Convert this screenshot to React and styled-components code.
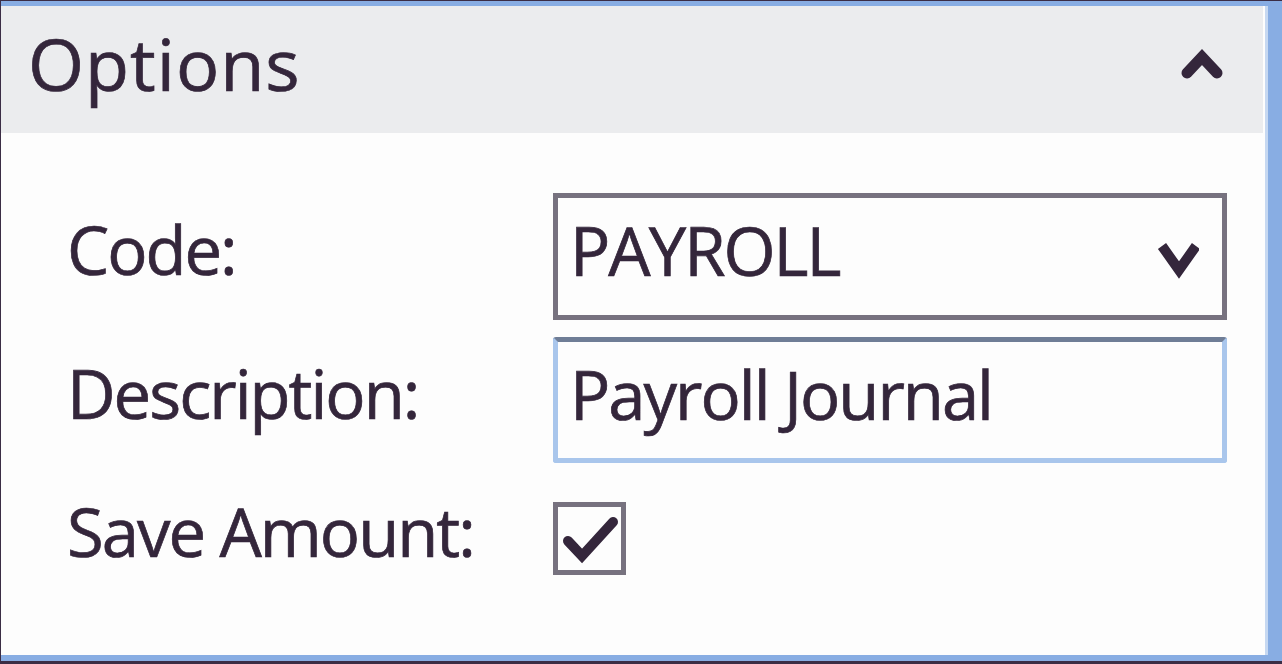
import React from "react";
import styled, { createGlobalStyle } from "styled-components";

const Global = createGlobalStyle`
  html, body {
    margin: 0;
    padding: 0;
    background: #ffffff;
  }
  #root {
    width: 1282px;
    height: 664px;
  }
`;

const ink = "#34263b";

const Frame = styled.div`
  box-sizing: border-box;
  width: 1282px;
  height: 664px;
  border-top: 1px solid #3b2d45;
  border-left: 1px solid #3b2d45;
  border-bottom: 3px solid #3b2d45;
  display: flex;
  font-family: "Open Sans", "Noto Sans", sans-serif;
  color: ${ink};
  -webkit-text-stroke: 0.7px ${ink};
`;

const Window = styled.div`
  box-sizing: border-box;
  flex: 1;
  display: flex;
  flex-direction: column;
  background: #fdfdfd;
  border-top: 5px solid #88ade3;
  border-right: 14px solid #88ade3;
  border-bottom: 6px solid #88ade3;
  box-shadow: inset -3px 0 0 #c6d8f1;
`;

const Header = styled.div`
  box-sizing: border-box;
  height: 127px;
  margin-right: 5px;
  background: #ebecee;
  display: flex;
  align-items: center;
  justify-content: space-between;
  padding-left: 27px;
  padding-right: 37px;
`;

const Title = styled.h1`
  margin: 0 0 13px 0;
  font-size: 72px;
  line-height: 1;
  font-weight: 400;
  letter-spacing: 1px;
`;

const Chevron = styled.svg`
  display: block;
  flex: none;
  margin-bottom: ${(p) => p.$shift || 0}px;
  margin-top: ${(p) => p.$drop || 0}px;
`;

const Body = styled.div`
  padding: 60px 0 0 66px;
`;

const FormGrid = styled.div`
  display: grid;
  grid-template-columns: 486px 674px;
  grid-template-rows: 127px 126px 117px;
  row-gap: 17px;
  align-items: center;
`;

const Label = styled.label`
  margin-bottom: 14px;
  font-size: 67px;
  line-height: 1;
  letter-spacing: -2px;
  white-space: nowrap;
`;

const Select = styled.div`
  box-sizing: border-box;
  height: 127px;
  border: 5px solid #77727f;
  background: #fdfdfd;
  display: flex;
  align-items: center;
  justify-content: space-between;
  padding: 0 23px 12px 12px;
`;

const Value = styled.span`
  font-size: 67px;
  line-height: 1;
  letter-spacing: -2px;
  white-space: nowrap;
`;

const TextBox = styled.input`
  box-sizing: border-box;
  width: 674px;
  height: 126px;
  margin: 0;
  padding: 0 8px 12px 12px;
  border: 5px solid #a9c6ec;
  border-top-color: #6f7d96;
  border-radius: 3px;
  background: #fdfdfd;
  outline: none;
  font-family: "Open Sans", "Noto Sans", sans-serif;
  font-size: 67px;
  line-height: 1;
  letter-spacing: -2px;
  color: ${ink};
  -webkit-text-stroke: 0.7px ${ink};
`;

const CheckBox = styled.span`
  box-sizing: border-box;
  display: flex;
  width: 73px;
  height: 73px;
  border: 5px solid #77727f;
  background: #fdfdfd;
`;

export default function App() {
  return (
    <>
      <Global />
      <Frame>
        <Window>
          <Header>
            <Title>Options</Title>
            <Chevron width="48" height="36" viewBox="0 0 48 36" $shift={11}>
              <polyline
                points="9,27 24,11 39,27"
                fill="none"
                stroke={ink}
                strokeWidth="11"
                strokeLinecap="round"
                strokeLinejoin="miter"
              />
            </Chevron>
          </Header>
          <Body>
            <FormGrid>
              <Label>Code:</Label>
              <Select>
                <Value>PAYROLL</Value>
                <Chevron width="44" height="40" viewBox="0 0 44 40" $drop={18}>
                  <polyline
                    points="7,6 24,30 41,6"
                    fill="none"
                    stroke={ink}
                    strokeWidth="10"
                    strokeLinecap="butt"
                    strokeLinejoin="miter"
                  />
                </Chevron>
              </Select>
              <Label>Description:</Label>
              <TextBox readOnly defaultValue="Payroll Journal" />
              <Label>Save Amount:</Label>
              <CheckBox>
                <svg width="63" height="63" viewBox="0 0 63 63">
                  <polyline
                    points="10,34 24,49 55,15"
                    fill="none"
                    stroke={ink}
                    strokeWidth="10"
                    strokeLinecap="round"
                    strokeLinejoin="miter"
                  />
                </svg>
              </CheckBox>
            </FormGrid>
          </Body>
        </Window>
      </Frame>
    </>
  );
}
